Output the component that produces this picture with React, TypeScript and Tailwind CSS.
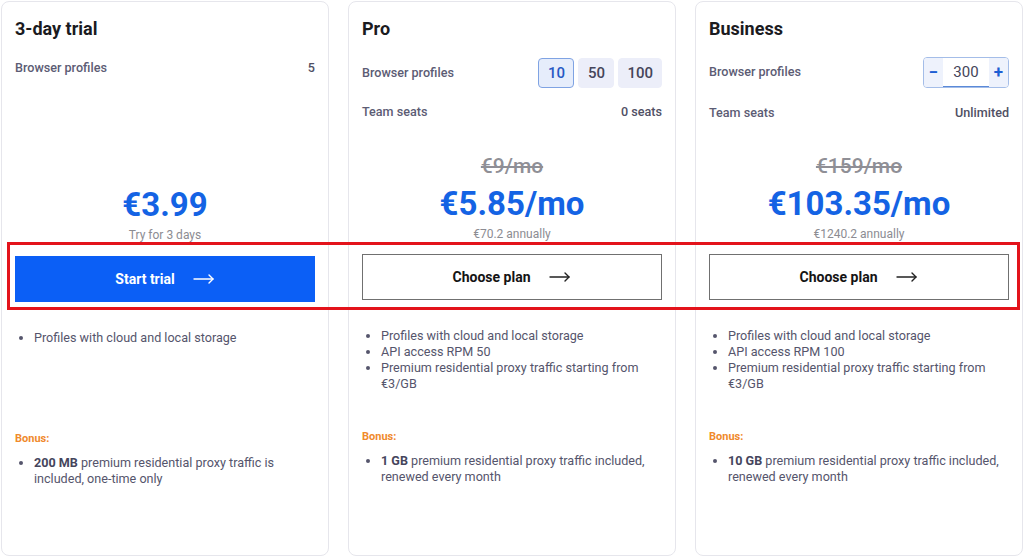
import React from "react"

interface IPlan {
    title: string
    price: string
    oldPrice?: string
    sub: string
    cta: string
    primary?: boolean
    features: string[]
    bonusStrong: string
    bonusText: string
}

const plans: IPlan[] = [
    {
        title: "3-day trial",
        price: "€3.99",
        sub: "Try for 3 days",
        cta: "Start trial",
        primary: true,
        features: ["Profiles with cloud and local storage"],
        bonusStrong: "200 MB",
        bonusText: " premium residential proxy traffic is included, one-time only",
    },
    {
        title: "Pro",
        price: "€5.85/mo",
        oldPrice: "€9/mo",
        sub: "€70.2 annually",
        cta: "Choose plan",
        features: [
            "Profiles with cloud and local storage",
            "API access RPM 50",
            "Premium residential proxy traffic starting from €3/GB",
        ],
        bonusStrong: "1 GB",
        bonusText: " premium residential proxy traffic included, renewed every month",
    },
    {
        title: "Business",
        price: "€103.35/mo",
        oldPrice: "€159/mo",
        sub: "€1240.2 annually",
        cta: "Choose plan",
        features: [
            "Profiles with cloud and local storage",
            "API access RPM 100",
            "Premium residential proxy traffic starting from €3/GB",
        ],
        bonusStrong: "10 GB",
        bonusText: " premium residential proxy traffic included, renewed every month",
    },
]

const Arrow = ({ color }: { color: string }) => (
    <svg width="22" height="10" viewBox="0 0 22 10" fill="none" stroke={color} strokeWidth="1.4" strokeLinecap="round" strokeLinejoin="round">
        <path d="M1 5h19" />
        <path d="M16 1l4 4-4 4" />
    </svg>
)

const Row = ({ label, children }: { label: string; children: React.ReactNode }) => (
    <div className="flex items-center justify-between">
        <span className="text-[12.6px] font-medium text-[#5c5c74]">{label}</span>
        {children}
    </div>
)

const TierPicker = () => {
    const [sel, setSel] = React.useState("10")
    return (
        <div className="flex gap-[4px]">
            {["10", "50", "100"].map((v) => (
                <button
                    key={v}
                    onClick={() => setSel(v)}
                    className={
                        sel === v
                            ? "h-[30px] min-w-[36px] px-[8px] rounded-[4px] border border-[#7fa3e3] bg-[#e6edfb] text-[15px] font-medium text-[#2659c4]"
                            : "h-[30px] min-w-[36px] px-[8px] rounded-[4px] border border-[#eceef9] bg-[#eceef9] text-[15px] font-medium text-[#45455a]"
                    }
                >
                    {v}
                </button>
            ))}
        </div>
    )
}

const Stepper = () => {
    const [count, setCount] = React.useState(300)
    return (
        <div className="flex h-[31px] w-[86px] overflow-hidden rounded-[4px] border border-[#a4bde8]">
            <button onClick={() => setCount(count - 10)} className="flex w-[19px] items-center justify-center bg-[#eef2fc] text-[17px] font-bold text-[#1d5fd3]">
                −
            </button>
            <div className="flex flex-1 items-center justify-center border-b border-[#5b8ad8] bg-white text-[15px] text-[#45455a]">
                {count}
            </div>
            <button onClick={() => setCount(count + 10)} className="flex w-[19px] items-center justify-center bg-[#eef2fc] text-[17px] font-bold text-[#1d5fd3]">
                +
            </button>
        </div>
    )
}

const PlanCard = ({ plan, index }: { plan: IPlan; index: number }) => {
    return (
        <div className="flex h-[555px] flex-1 flex-col rounded-[8px] border border-[#e6e6ec] bg-white">
            {/* header + options */}
            <div className="h-[140px] px-[13px] pt-[14px]">
                <h2 className="h-[26px] text-[18px] font-bold leading-[26px] text-[#1b1b1f]">{plan.title}</h2>

                {index === 0 && (
                    <div className="mt-[17px]">
                        <Row label="Browser profiles">
                            <span className="text-[12.6px] font-medium text-[#505064]">5</span>
                        </Row>
                    </div>
                )}

                {index === 1 && (
                    <div className="mt-[16px] flex flex-col gap-[15px]">
                        <Row label="Browser profiles">
                            <TierPicker />
                        </Row>
                        <Row label="Team seats">
                            <span className="text-[12.6px] font-medium text-[#505064]">0 seats</span>
                        </Row>
                    </div>
                )}

                {index === 2 && (
                    <div className="mt-[15px] flex flex-col gap-[16px]">
                        <Row label="Browser profiles">
                            <Stepper />
                        </Row>
                        <Row label="Team seats">
                            <span className="text-[12.6px] font-medium text-[#505064]">Unlimited</span>
                        </Row>
                    </div>
                )}
            </div>

            {/* price */}
            <div className={index === 0 ? "flex h-[114px] flex-col items-center justify-end pb-[13px]" : "flex h-[112px] flex-col items-center justify-end pb-[12px]"}>
                {plan.oldPrice && (
                    <span className="mb-[6px] text-[21px] font-medium leading-[24px] text-[#8f8f96] line-through">{plan.oldPrice}</span>
                )}
                <span className="text-[33px] font-bold leading-[40px] text-[#1463e4]">{plan.price}</span>
                <span className="mt-[2px] text-[12px] leading-[16px] text-[#8c8c92]">{plan.sub}</span>
            </div>

            {/* action */}
            <div className="px-[13px]">
                {plan.primary ? (
                    <button className="flex h-[46px] w-full items-center justify-center gap-[18px] bg-[#0b5ff6] text-[14px] font-bold text-white">
                        {plan.cta}
                        <Arrow color="#ffffff" />
                    </button>
                ) : (
                    <button className="flex h-[46px] w-full items-center justify-center gap-[19px] border border-[#707070] bg-white text-[14px] font-bold text-[#141414]">
                        {plan.cta}
                        <Arrow color="#222222" />
                    </button>
                )}
            </div>

            {/* features */}
            <ul className="mt-[28px] h-[102px] list-disc pl-[32px] pr-[13px] text-[12.6px] leading-[16px] text-[#55556c] marker:text-[#55556c]">
                {plan.features.map((f) => (
                    <li key={f}>{f}</li>
                ))}
            </ul>

            {/* bonus */}
            <div className="px-[13px]">
                <p className="text-[11px] font-bold leading-[14px] text-[#f08a2c]">Bonus:</p>
                <ul className="mt-[9px] list-disc pl-[19px] text-[12.6px] leading-[16px] text-[#55556c]">
                    <li>
                        <b className="font-bold text-[#45455c]">{plan.bonusStrong}</b>
                        {plan.bonusText}
                    </li>
                </ul>
            </div>
        </div>
    )
}

export default function App() {
    return (
        <div className="relative h-[557px] w-[1024px] overflow-hidden bg-white font-['Roboto',sans-serif]">
            <div className="flex gap-[19px] px-[1px] pt-[1px]">
                {plans.map((p, i) => (
                    <PlanCard key={p.title} plan={p} index={i} />
                ))}
            </div>

            {/* highlight box */}
            <div className="pointer-events-none absolute left-[7px] top-[242px] h-[68px] w-[1013px] border-[3px] border-[#e3131b]" />
        </div>
    )
}
